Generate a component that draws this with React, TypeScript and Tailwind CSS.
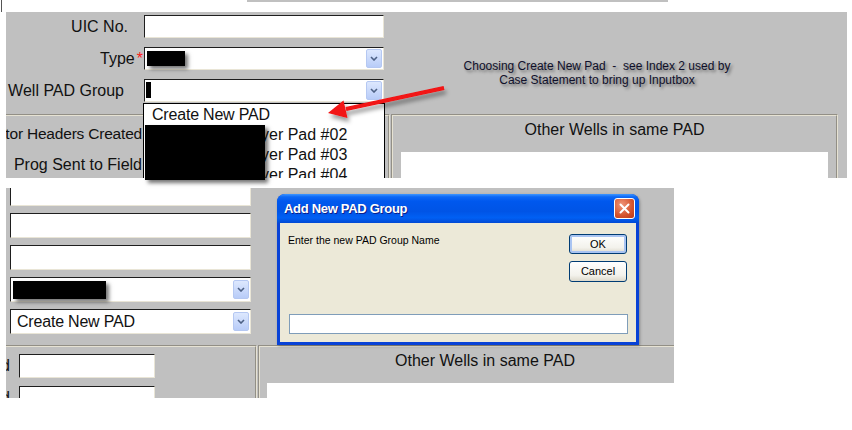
import React from "react";

type FieldProps = {
  className: string;
  select?: boolean;
  children?: React.ReactNode;
};

const DropBtn = () => (
  <div className="flex h-[19px] w-[16px] shrink-0 items-center justify-center rounded-[2px] border border-[#b5c8f2] bg-[linear-gradient(180deg,#dde8fe,#b8ccf8)]">
    <svg width="8" height="5" viewBox="0 0 8 5">
      <path d="M1 1l3 3 3-3" fill="none" stroke="#4d6185" strokeWidth="1.6" />
    </svg>
  </div>
);

// sunken win32 edit / combo box
const Field = ({ className, select, children }: FieldProps) => (
  <div
    className={`flex shrink-0 items-center bg-white pr-[1px] border border-t-[#1e1e1e] border-l-[#1e1e1e] border-r-[#e9e5d6] border-b-[#e9e5d6] ${className}`}
  >
    <span className="flex-1 whitespace-nowrap pl-[7px] text-[16px] leading-none text-[#111]">
      {children}
    </span>
    {select && <DropBtn />}
  </div>
);

const Redact = ({ className }: { className: string }) => (
  <div
    className={`absolute bg-black shadow-[3px_3px_4px_rgba(0,0,0,0.55)] ${className}`}
  />
);

const TopShot = () => (
  <div className="absolute left-[6px] top-[12px] flex h-[166px] w-[841px] flex-col overflow-hidden bg-[#c0c0c0] text-[#111]">
    <div className="flex h-[102px] shrink-0">
      <div className="flex w-[378px] shrink-0 flex-col gap-[9px] pt-[3px] text-[16px]">
        <div className="flex h-[23px] items-center">
          <span className="w-[138px] pr-[16px] text-right">UIC No.</span>
          <Field className="h-[23px] w-[240px]" />
        </div>
        <div className="flex h-[23px] items-center">
          <span className="w-[138px] pr-[1px] text-right">
            Type<span className="ml-[2px] text-[#ff1a1a]">*</span>
          </span>
          <Field className="h-[23px] w-[240px]" select />
        </div>
        <div className="flex h-[23px] items-center">
          <span className="w-[138px] pr-[20px] text-right whitespace-nowrap">
            Well PAD Group
          </span>
          <Field className="h-[23px] w-[240px]" select />
        </div>
      </div>

      <div className="ml-[63px] w-[300px] shrink-0 pt-[47px] text-center text-[12px] leading-[14px] text-[#10102a] [text-shadow:2px_2px_3px_rgba(0,0,0,0.45)]">
        <div className="whitespace-pre">Choosing Create New Pad  -  see Index 2 used by</div>
        <div>Case Statement to bring up Inputbox</div>
      </div>
    </div>

    <div className="flex flex-1">
      <div className="flex w-[384px] shrink-0 flex-col gap-[11px] border-t-2 border-r-2 border-[#e6e2d3] pt-[8px] text-[16px] leading-[20px] [border-style:groove]">
        <div className="flex w-[136px] justify-end">
          <span className="shrink-0 whitespace-nowrap text-[15.5px] tracking-[-0.2px]">
            Operator Headers Created
          </span>
        </div>
        <div className="flex w-[136px] justify-end">
          <span className="shrink-0 whitespace-nowrap">Prog Sent to Field</span>
        </div>
      </div>
      <div className="ml-[1px] flex w-[447px] shrink-0 flex-col border-t-2 border-x-2 border-[#e6e2d3] [border-style:groove]">
        <div className="h-[36px] shrink-0 pt-[5px] text-center text-[16px] leading-[18px]">
          Other Wells in same PAD
        </div>
        <div className="mx-[8px] flex-1 bg-white" />
      </div>
    </div>

    {/* open drop-down list */}
    <div className="absolute left-[137px] top-[91px] h-[80px] w-[242px] border border-b-0 border-black bg-white pt-[1px] text-[16px] leading-[20px]">
      <div className="pl-[8px] tracking-[-0.2px]">Create New PAD</div>
      <div className="pl-[117px]">yer Pad #02</div>
      <div className="pl-[117px]">yer Pad #03</div>
      <div className="pl-[117px]">yer Pad #04</div>
    </div>
  </div>
);

const XpButton = ({ label, primary }: { label: string; primary?: boolean }) => (
  <div
    className={`flex w-[58px] items-center justify-center rounded-[3px] border border-[#003c74] bg-[linear-gradient(180deg,#ffffff,#f3f2ec_70%,#dcd8cb)] text-[11px] text-black ${
      primary ? "h-[20px] shadow-[inset_0_0_0_2px_#a9c4f2]" : "h-[21px]"
    }`}
  >
    {label}
  </div>
);

const Dialog = () => (
  <div className="absolute left-[277px] top-[194px] flex h-[151px] w-[362px] flex-col overflow-hidden rounded-t-[8px] bg-[#0842d6] shadow-[1px_1px_3px_rgba(0,0,0,0.3)]">
    <div className="flex h-[29px] shrink-0 items-center justify-between bg-[linear-gradient(180deg,#3f97ff_0%,#0d68f6_10%,#0058ee_25%,#0054e6_60%,#0060f4_82%,#0249d4_100%)] pl-[7px] pr-[4px]">
      <span className="text-[13px] font-bold tracking-[-0.3px] text-white [text-shadow:1px_1px_0_#0a1e8c]">
        Add New PAD Group
      </span>
      <div className="flex h-[21px] w-[21px] items-center justify-center rounded-[3px] border border-white bg-[radial-gradient(circle_at_35%_30%,#f0967a,#d5532c_60%,#b8381a)]">
        <svg width="11" height="11" viewBox="0 0 11 11">
          <path d="M1.5 1.5l8 8M9.5 1.5l-8 8" stroke="#fff" strokeWidth="2" strokeLinecap="round" />
        </svg>
      </div>
    </div>
    <div className="mx-[3px] mb-[3px] flex flex-1 flex-col bg-[#ece9d8] px-[8px] pb-[8px] pt-[11px]">
      <div className="flex items-start justify-between">
        <span className="text-[10.5px] leading-[13px] text-black">
          Enter the new PAD Group Name
        </span>
        <div className="mr-[1px] flex flex-col gap-[7px]">
          <XpButton label="OK" primary />
          <XpButton label="Cancel" />
        </div>
      </div>
      <div className="ml-[1px] mt-auto h-[20px] border border-[#7f9db9] bg-white" />
    </div>
  </div>
);

const BottomShot = () => (
  <div className="absolute left-[6px] top-[188px] flex h-[210px] w-[668px] flex-col overflow-hidden bg-[#c0c0c0] text-[#111]">
    <div className="flex h-[157px] shrink-0 flex-col gap-[7px] pl-[4px]">
      <Field className="-mt-[7px] h-[25px] w-[241px]" />
      <Field className="h-[25px] w-[241px]" />
      <Field className="h-[25px] w-[241px]" />
      <Field className="h-[25px] w-[241px]" select />
      <Field className="h-[25px] w-[241px]" select>
        <span className="-ml-[1px] tracking-[-0.2px]">Create New PAD</span>
      </Field>
    </div>
    <div className="flex flex-1">
      <div className="flex w-[251px] shrink-0 flex-col gap-[8px] border-t-2 border-r-2 border-[#e6e2d3] pt-[7px] text-[16px] [border-style:groove]">
        <div className="flex h-[24px] items-center">
          <div className="flex w-[4px] shrink-0 justify-end">
            <span className="shrink-0 whitespace-nowrap">Created</span>
          </div>
          <Field className="ml-[9px] h-[24px] w-[136px]" />
        </div>
        <div className="flex h-[24px] items-center">
          <div className="flex w-[4px] shrink-0 justify-end">
            <span className="shrink-0 whitespace-nowrap">Field</span>
          </div>
          <Field className="ml-[9px] h-[24px] w-[136px]" />
        </div>
      </div>
      <div className="ml-[1px] flex w-[452px] shrink-0 flex-col border-t-2 border-l-2 border-[#e6e2d3] [border-style:groove]">
        <div className="h-[36px] shrink-0 pt-[5px] text-center text-[16px] leading-[18px]">
          Other Wells in same PAD
        </div>
        <div className="ml-[7px] flex-1 bg-white" />
      </div>
    </div>
  </div>
);

export default function App() {
  return (
    <div className="relative h-[430px] w-[852px] overflow-hidden bg-white font-['Liberation_Sans',Arial,sans-serif]">
      <div className="absolute left-[247px] top-0 h-[2px] w-[421px] bg-[#c0c0c0]" />
      <div className="absolute left-[1px] top-0 h-[12px] w-[1px] bg-[#555]" />

      <TopShot />
      <BottomShot />
      <Dialog />

      <Redact className="left-[147px] top-[51px] h-[15px] w-[38px]" />
      <div className="absolute left-[146px] top-[82px] h-[16px] w-[5px] bg-black" />
      <Redact className="left-[145px] top-[125px] h-[55px] w-[120px]" />
      <Redact className="left-[13px] top-[281px] h-[18px] w-[93px]" />

      <svg className="pointer-events-none absolute left-0 top-0" width="852" height="430">
        <defs>
          <filter id="arrowShadow" x="-20%" y="-80%" width="140%" height="260%">
            <feDropShadow dx="2" dy="4" stdDeviation="2" floodColor="#000" floodOpacity="0.4" />
          </filter>
        </defs>
        <g filter="url(#arrowShadow)">
          <line x1="444" y1="88" x2="346" y2="109" stroke="#f21212" strokeWidth="4" />
          <polygon points="328,113 343.5,100.5 347.5,118" fill="#f21212" />
        </g>
      </svg>
    </div>
  );
}
